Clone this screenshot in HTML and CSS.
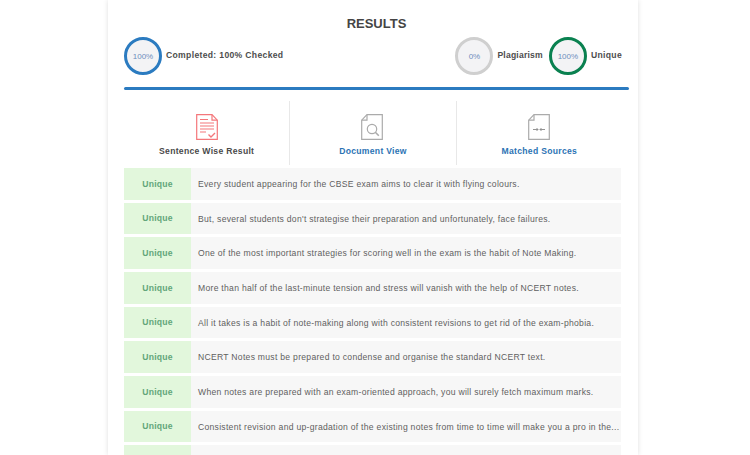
FILE: index.html
```html
<!DOCTYPE html>
<html lang="en">
<head>
<meta charset="utf-8">
<title>Results</title>
<link rel="stylesheet" href="styles.css">
</head>
<body>
<main class="card">
  <h1 class="title">RESULTS</h1>
  <section class="stats">
    <div class="stat">
      <div class="ring ring-blue">100%</div>
      <span class="stat-label">Completed: 100% Checked</span>
    </div>
    <div class="stat-group">
      <div class="stat">
        <div class="ring ring-grey">0%</div>
        <span class="stat-label stat-label-tight">Plagiarism</span>
      </div>
      <div class="stat">
        <div class="ring ring-green">100%</div>
        <span class="stat-label">Unique</span>
      </div>
    </div>
  </section>
  <div class="rule"></div>
  <nav class="tabs">
    <div class="tab">
      <svg class="icon" width="22" height="26" viewBox="0 0 22 26" fill="none" stroke="#f4777b" stroke-width="1.200">
        <path d="M.7.700h15.300l5.300 5.500v19.100h-20.600z"/>
        <path d="M16 .7v5.500h5.300"/>
        <path d="M4 5.500h8M4 9h14M4 12h14M4 15h14M4 18h6"/>
        <path d="M12.500 20.500l2.500 2.500 4-4" stroke-width="1.400"/>
      </svg>
      <span class="tab-label tab-active">Sentence Wise Result</span>
    </div>
    <div class="tab">
      <svg class="icon icon-doc" width="22" height="26" viewBox="0 0 22 26" fill="none" stroke="#ababab" stroke-width="1.200">
        <path d="M6 .7h15.300v24.600h-20.600v-19.100z"/>
        <path d="M6 .7v5.500h-5.300"/>
        <circle cx="11" cy="15" r="4.700"/>
        <path d="M14.300 18.300l3.500 3.500" stroke-width="1.600"/>
      </svg>
      <span class="tab-label">Document View</span>
    </div>
    <div class="tab">
      <svg class="icon" width="22" height="26" viewBox="0 0 22 26" fill="none" stroke="#ababab" stroke-width="1.200">
        <path d="M6 .7h15.300v24.600h-20.600v-19.100z"/>
        <path d="M6 .7v5.500h-5.300"/>
        <path d="M5 15.500h5M8.500 14l1.500 1.500-1.500 1.500M17 15.500h-5M13.500 14l-1.500 1.500 1.500 1.500" stroke="#888" stroke-width=".9"/>
      </svg>
      <span class="tab-label">Matched Sources</span>
    </div>
  </nav>
  <section class="rows">
    <div class="row"><div class="badge">Unique</div><div class="sentence">Every student appearing for the CBSE exam aims to clear it with flying colours.</div></div>
    <div class="row"><div class="badge">Unique</div><div class="sentence">But, several students don't strategise their preparation and unfortunately, face failures.</div></div>
    <div class="row"><div class="badge">Unique</div><div class="sentence">One of the most important strategies for scoring well in the exam is the habit of Note Making.</div></div>
    <div class="row"><div class="badge">Unique</div><div class="sentence">More than half of the last-minute tension and stress will vanish with the help of NCERT notes.</div></div>
    <div class="row"><div class="badge">Unique</div><div class="sentence">All it takes is a habit of note-making along with consistent revisions to get rid of the exam-phobia.</div></div>
    <div class="row"><div class="badge">Unique</div><div class="sentence">NCERT Notes must be prepared to condense and organise the standard NCERT text.</div></div>
    <div class="row"><div class="badge">Unique</div><div class="sentence">When notes are prepared with an exam-oriented approach, you will surely fetch maximum marks.</div></div>
    <div class="row"><div class="badge">Unique</div><div class="sentence">Consistent revision and up-gradation of the existing notes from time to time will make you a pro in the...</div></div>
    <div class="row"><div class="badge"></div><div class="sentence"></div></div>
  </section>
</main>
</body>
</html>
```
FILE: styles.css
```css
* { box-sizing: border-box; }
html, body { margin: 0; height: 100%; overflow: hidden; background: #fff; }
body { font-family: "Liberation Sans", Arial, sans-serif; color: #4a4a4a; }
.card {
  width: 530px;
  height: 455px;
  margin-left: 108px;
  padding: 16px 9px 0 16px;
  background: #fff;
  box-shadow: 0 0 5px rgba(0, 0, 0, 0.13);
  overflow: hidden;
}
.title {
  margin: 0;
  font-size: 13px;
  line-height: 16px;
  font-weight: 700;
  text-align: center;
  color: #444;
}
.stats {
  display: flex;
  justify-content: space-between;
  margin-top: 5px;
  padding-right: 7px;
}
.stat-group { display: flex; gap: 6px; }
.stat { display: flex; align-items: flex-start; gap: 4px; }
.ring {
  width: 38px;
  height: 38px;
  flex: none;
  display: flex;
  align-items: center;
  justify-content: center;
  border-radius: 50%;
  border: 3px solid #ccc;
  background: #f3f3f5;
  font-size: 8px;
  padding-top: 1px;
  color: #6d8ebd;
}
.ring-blue { border-color: #2b7bc0; }
.ring-grey { border-color: #cfcfcf; }
.ring-green { border-color: #0a8150; }
.stat-label {
  margin-top: 13px;
  font-size: 8.600px;
  line-height: 11px;
  font-weight: 700;
  letter-spacing: 0.330px;
  color: #4d4d4d;
}
.stat-label-tight { letter-spacing: 0.200px; }
.rule { height: 3px; margin-top: 12px; background: #2b7bc0; border-radius: 2px; }
.tabs { display: flex; margin-top: 11px; height: 64px; width: 498px; }
.tab {
  flex: 1;
  display: flex;
  flex-direction: column;
  align-items: center;
  padding-top: 13px;
  border-left: 1px solid #e8e8e8;
}
.tab:first-child { border-left: 0; }
.icon { display: block; flex: none; }
.icon-doc { margin-right: 2px; }
.tab-label {
  margin-top: 6px;
  font-size: 8.600px;
  line-height: 11px;
  font-weight: 700;
  letter-spacing: 0.300px;
  color: #2b73b4;
}
.tab-active { color: #4a4a4a; }
.rows { margin-top: 3px; width: 497px; display: flex; flex-direction: column; gap: 3px; }
.row { display: flex; height: 31.670px; flex: none; background: #f7f7f7; }
.badge {
  width: 67px;
  flex: none;
  display: flex;
  align-items: center;
  justify-content: center;
  background: #e2f7dc;
  font-size: 8.600px;
  font-weight: 700;
  letter-spacing: 0.200px;
  color: #63a67a;
}
.sentence {
  flex: 1;
  min-width: 0;
  padding-left: 7px;
  font-size: 8.600px;
  line-height: 32px;
  letter-spacing: 0.280px;
  color: #5f5f5f;
  white-space: nowrap;
  overflow: hidden;
}
```
